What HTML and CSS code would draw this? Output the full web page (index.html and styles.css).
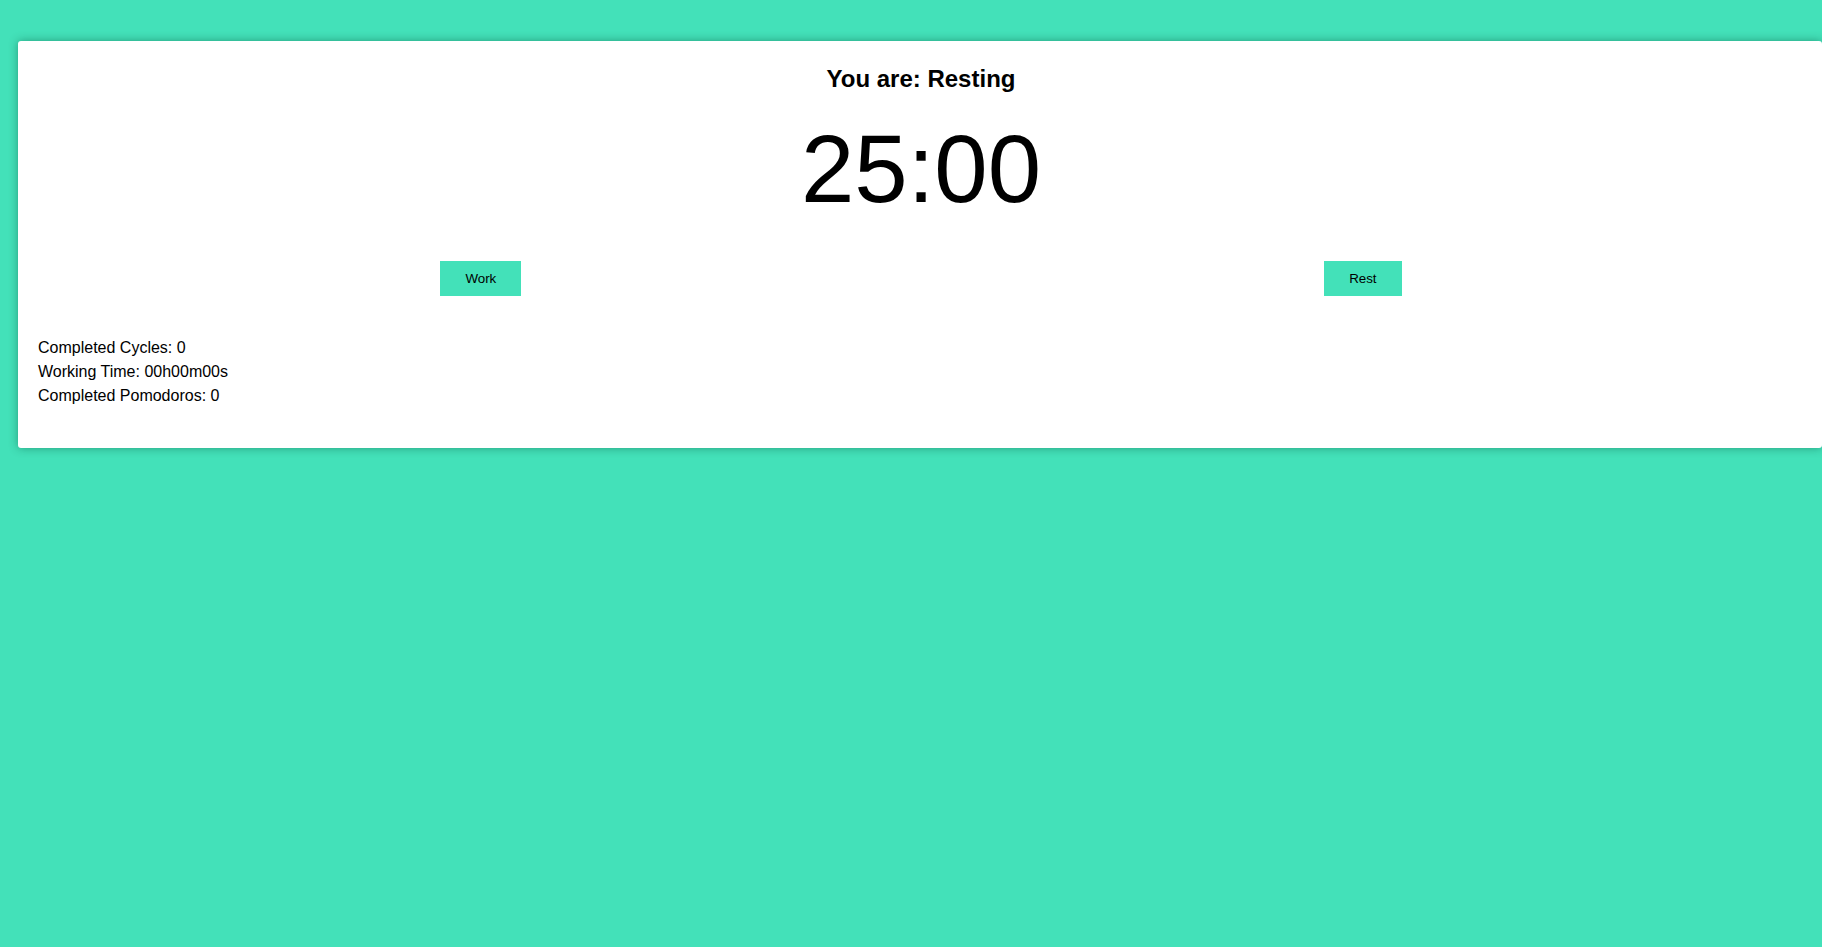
FILE: index.html
```html
<!DOCTYPE html>
<html>
<head>
<meta charset="utf-8">
<title>Pomodoro</title>
<link rel="stylesheet" href="styles.css">
</head>
<body>
<div class="card">
  <h2 class="status">You are: Resting</h2>
  <div class="timer">25:00</div>
  <div class="controls">
    <button class="btn">Work</button>
    <button class="btn">Rest</button>
  </div>
  <div class="stats">
    <div>Completed Cycles: 0</div>
    <div>Working Time: 00h00m00s</div>
    <div>Completed Pomodoros: 0</div>
  </div>
</div>
</body>
</html>
```
FILE: styles.css
```css
html, body {
  margin: 0;
  padding: 0;
}
body {
  background: #43e1b9;
  font-family: "Liberation Sans", Arial, sans-serif;
  color: #000;
  overflow: hidden;
  height: 947px;
}
.card {
  margin: 41px 0 0 18px;
  width: calc(100% - 18px);
  box-sizing: border-box;
  background: #fff;
  border-radius: 3px;
  box-shadow: 0 0 10px rgba(0, 70, 50, 0.45);
  padding: 24px 19px 40px 21px;
}
.status {
  margin: 0;
  text-align: center;
  font-size: 24px;
  font-weight: bold;
  line-height: 28px;
}
.timer {
  margin-top: 21px;
  text-align: center;
  font-size: 96px;
  line-height: 110px;
}
.controls {
  margin-top: 37px;
  display: flex;
  justify-content: space-around;
}
.btn {
  height: 35px;
  padding: 0 25px;
  border: none;
  background: #43e1b9;
  color: #000;
  font-family: "Liberation Sans", Arial, sans-serif;
  font-size: 13.33px;
}
.stats {
  margin-top: 40px;
  margin-left: -1px;
  font-size: 16px;
  line-height: 24px;
}
```
